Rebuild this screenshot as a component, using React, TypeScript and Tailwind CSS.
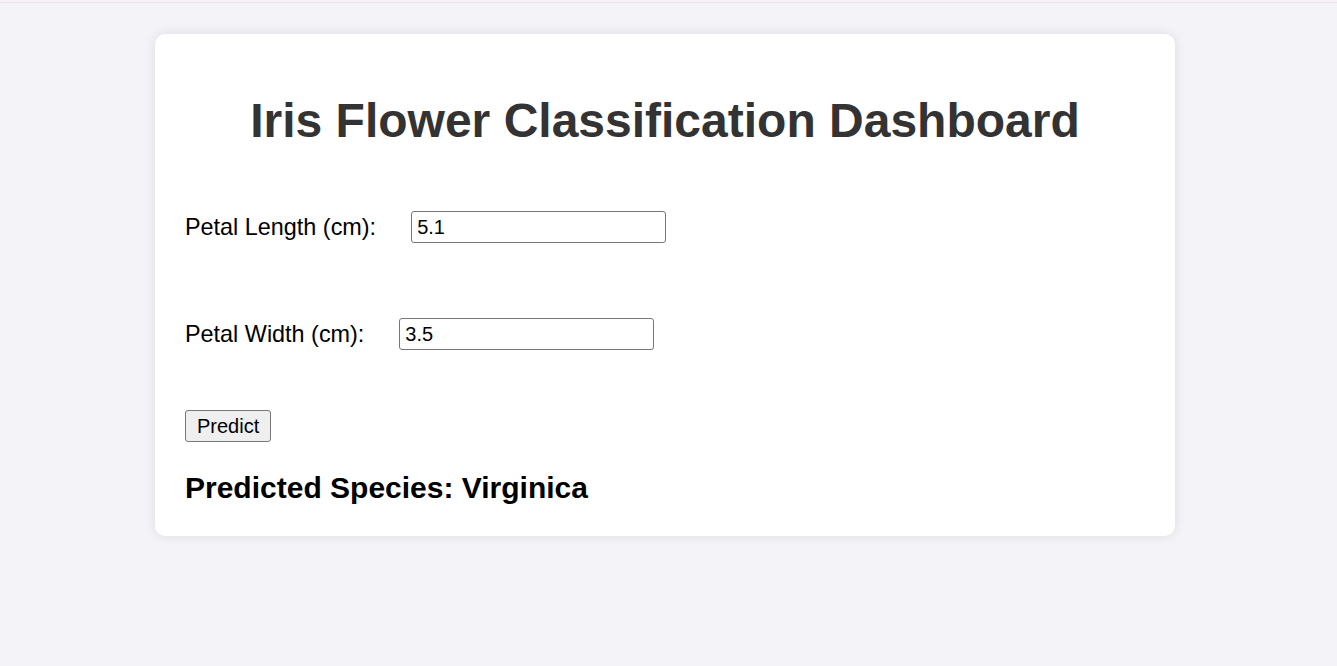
import React from "react";

export default function App() {
  return (
    <div className="min-h-[666px] bg-[#f4f3f8] font-['Liberation_Sans',Arial,sans-serif]">
      <div className="h-[2px] bg-[#f4f3f8]" />
      <div className="h-[1px] bg-[#f3dff0]" />
      <div className="pl-[155px] pt-[31px]">
        <div className="w-[1020px] bg-white rounded-[10px] shadow-[0_0_12px_rgba(0,0,0,0.1)] pt-[59px] pb-[34px] px-[30px]">
          <h1 className="text-center text-[48px] leading-[55px] font-bold text-[#333333]">
            Iris Flower Classification Dashboard
          </h1>
          <div className="mt-[63px] flex items-center">
            <label className="text-[23.4px] leading-[26px] text-black">Petal Length (cm):</label>
            <input
              defaultValue="5.1"
              className="ml-[35px] w-[255px] h-[32px] border border-[#767676] rounded-[3px] px-[5px] text-[20px] text-black outline-none"
            />
          </div>
          <div className="mt-[75px] flex items-center">
            <label className="text-[23.4px] leading-[26px] text-black">Petal Width (cm):</label>
            <input
              defaultValue="3.5"
              className="ml-[35px] w-[255px] h-[32px] border border-[#767676] rounded-[3px] px-[5px] text-[20px] text-black outline-none"
            />
          </div>
          <div className="mt-[60px]">
            <button className="h-[32px] px-[11px] bg-[#efefef] border border-[#767676] rounded-[3px] text-[20px] leading-[23px] text-black">
              Predict
            </button>
          </div>
          <h2 className="mt-[32px] text-[30px] leading-[28px] font-bold text-black">
            Predicted Species: Virginica
          </h2>
        </div>
      </div>
    </div>
  );
}
